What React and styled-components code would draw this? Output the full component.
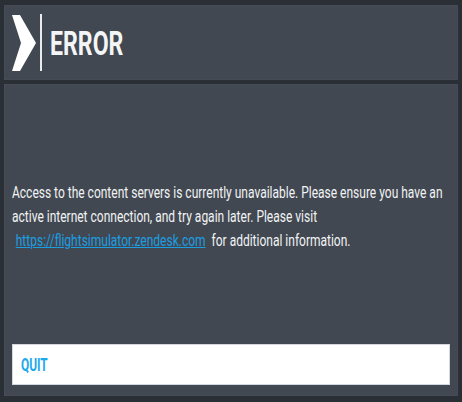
import React from 'react'
import styled, { createGlobalStyle } from 'styled-components'

const Global = createGlobalStyle`
html, body {
  margin: 0;
  padding: 0;
  width: 462px;
  height: 402px;
  background: #2a2f36;
  overflow: hidden;
}
* { box-sizing: border-box; }
`

const Frame = styled.div`
width: 462px;
height: 402px;
padding: 5px 4px 6px 4px;
display: flex;
flex-direction: column;
gap: 4px;
font-family: Roboto, "Liberation Sans", sans-serif;
`

const Panel = styled.div`
background: #414851;
border: 1px solid #454c55;
`

const Header = styled(Panel)`
height: 75px;
display: flex;
align-items: center;
padding-left: 7px;
`

const Chevron = styled.svg`
width: 24px;
height: 56px;
display: block;
`

const Divider = styled.div`
width: 2px;
height: 57px;
background: #e9ebee;
margin-left: 4px;
`

const Title = styled.h1`
margin: 0 0 0 8px;
font-size: 34px;
font-weight: 700;
color: #f4f5f6;
transform: scaleX(0.68);
transform-origin: left center;
line-height: 1;
`

const Body = styled(Panel)`
flex: 1;
display: flex;
flex-direction: column;
padding: 96px 7px 10px 7px;
`

const Message = styled.p`
flex: 1;
margin: 0;
font-size: 16px;
line-height: 24px;
color: #f2f3f4;
white-space: nowrap;
transform: scaleX(0.75);
transform-origin: left top;
`

const Link = styled.a`
color: #1c9ee2;
text-decoration: underline;
margin: 0 8px 0 5px;
`

const QuitButton = styled.button`
height: 41px;
width: 100%;
background: #ffffff;
border: 1px solid #d4d8de;
border-radius: 0;
padding: 0 0 0 8px;
text-align: left;
cursor: pointer;
font-family: Roboto, "Liberation Sans", sans-serif;
`

const QuitLabel = styled.span`
display: inline-block;
font-size: 18px;
font-weight: 700;
color: #1ba9ec;
transform: scaleX(0.66);
transform-origin: left center;
`

export default function App() {
  return (
    <>
      <Global />
      <Frame>
        <Header>
          <Chevron viewBox="0 0 24 56">
            <polygon points="0,0 8,0 24,28 8,56 0,56 9,28" fill="#ffffff" />
          </Chevron>
          <Divider />
          <Title>ERROR</Title>
        </Header>
        <Body>
          <Message>
            Access to the content servers is currently unavailable. Please ensure you have an
            <br />
            active internet connection, and try again later. Please visit
            <br />
            <Link href="#">https://flightsimulator.zendesk.com</Link>for additional information.
          </Message>
          <QuitButton>
            <QuitLabel>QUIT</QuitLabel>
          </QuitButton>
        </Body>
      </Frame>
    </>
  )
}
